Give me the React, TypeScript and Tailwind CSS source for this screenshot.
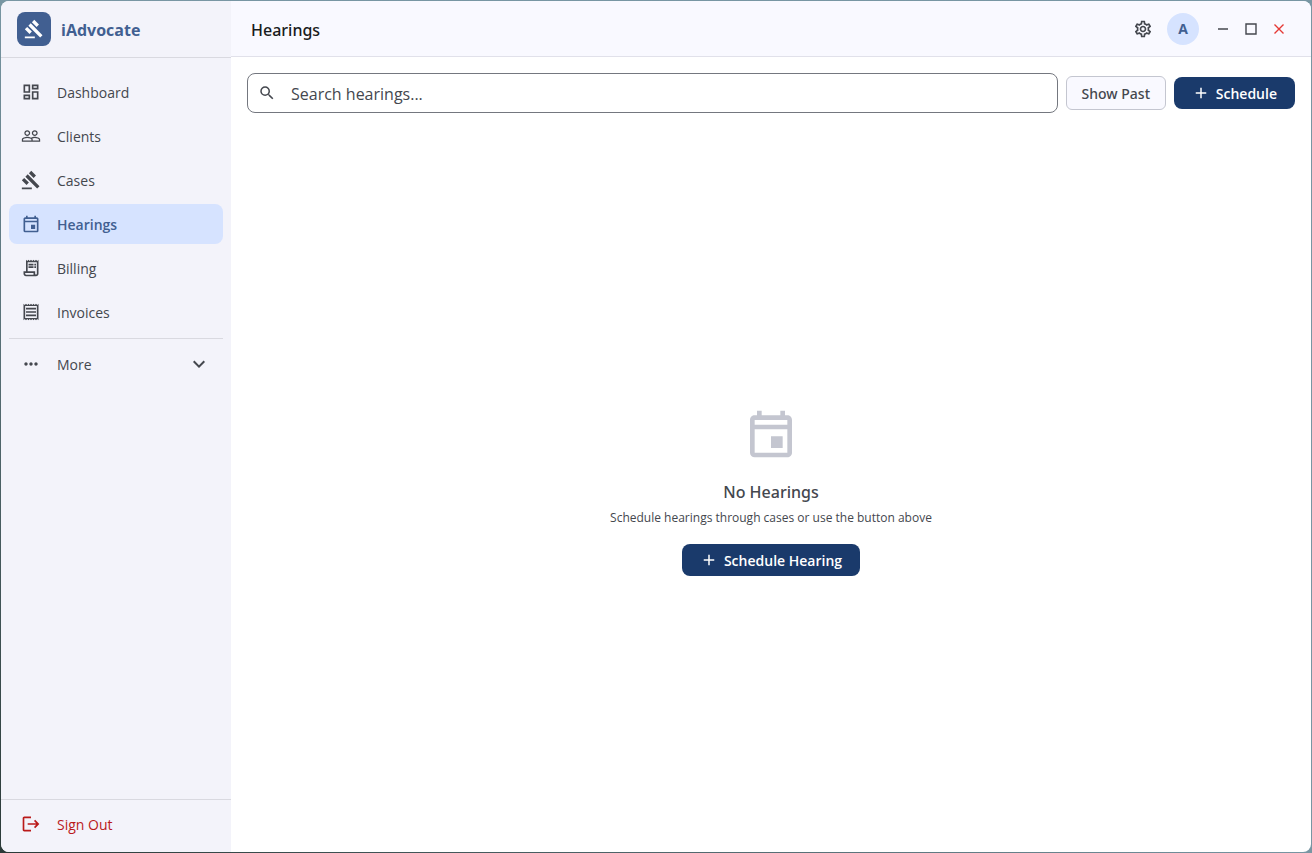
import { useState } from "react";
import type { IconType } from "react-icons";
import {
  MdAdd,
  MdExpandMore,
  MdGavel,
  MdLogout,
  MdMoreHoriz,
  MdOutlineDashboard,
  MdOutlineEvent,
  MdOutlineReceipt,
  MdOutlineReceiptLong,
  MdOutlineSettings,
  MdPeopleOutline,
  MdSearch,
} from "react-icons/md";

type NavItem = { label: string; icon: IconType };

const NAV: NavItem[] = [
  { label: "Dashboard", icon: MdOutlineDashboard },
  { label: "Clients", icon: MdPeopleOutline },
  { label: "Cases", icon: MdGavel },
  { label: "Hearings", icon: MdOutlineEvent },
  { label: "Billing", icon: MdOutlineReceiptLong },
  { label: "Invoices", icon: MdOutlineReceipt },
];

function Sidebar() {
  const [active, setActive] = useState("Hearings");

  return (
    <aside className="flex w-[230px] shrink-0 flex-col bg-[#f3f3fa]">
      <div className="flex h-[57px] items-center gap-2.5 border-b border-[#d9d9e0] px-4">
        <span className="grid size-[34px] place-items-center rounded-lg bg-[#415f91] text-white">
          <MdGavel className="size-5" />
        </span>
        <span className="pt-0.5 text-base font-bold text-[#415f91]">iAdvocate</span>
      </div>

      <nav className="flex flex-col gap-1 px-2 pt-3.5">
        {NAV.map(({ label, icon: Icon }) => (
          <button
            key={label}
            onClick={() => setActive(label)}
            className={
              active === label
                ? "flex h-10 items-center gap-4 rounded-lg bg-[#d6e3ff] px-3 text-sm font-semibold text-[#415f91]"
                : "flex h-10 items-center gap-4 rounded-lg px-3 text-sm text-[#44474e]"
            }
          >
            <Icon className="size-5" />
            <span className="pt-0.5">{label}</span>
          </button>
        ))}
        <hr className="mt-0.5 mb-px border-[#d9d9e0]" />
        <button className="flex h-10 items-center gap-4 rounded-lg px-3 text-sm text-[#44474e]">
          <MdMoreHoriz className="size-5" />
          <span className="pt-0.5">More</span>
          <MdExpandMore className="ml-auto size-6" />
        </button>
      </nav>

      <div className="mt-auto border-t border-[#d9d9e0] px-2 pt-1 pb-2">
        <button className="flex h-10 w-full items-center gap-4 rounded-lg px-3 text-sm text-[#ba1a1a]">
          <MdLogout className="size-5" />
          <span className="pt-0.5">Sign Out</span>
        </button>
      </div>
    </aside>
  );
}

function TopBar() {
  return (
    <header className="flex h-14 items-center border-b border-[#e1e1ea] bg-[#f9f9ff] pr-[18px] pl-5">
      <h1 className="pt-0.5 font-['Noto_Sans',sans-serif] text-base font-medium text-[#191c20]">
        Hearings
      </h1>
      <div className="ml-auto flex items-center">
        <button aria-label="Settings" className="grid size-8 place-items-center text-[#44474e]">
          <MdOutlineSettings className="size-5" />
        </button>
        <button className="mr-2.5 ml-2 size-8 rounded-full bg-[#d6e3ff] text-sm font-bold text-[#415f91]">
          A
        </button>
        <button aria-label="Minimize" className="grid size-7 place-items-center text-[#44474e]">
          <svg viewBox="0 0 12 12" className="size-3" fill="none" stroke="currentColor">
            <path d="M1 6h10" strokeWidth="1.4" />
          </svg>
        </button>
        <button aria-label="Maximize" className="grid size-7 place-items-center text-[#44474e]">
          <svg viewBox="0 0 12 12" className="size-3" fill="none" stroke="currentColor">
            <path d="M1 1h10v10H1z" strokeWidth="1.4" />
          </svg>
        </button>
        <button aria-label="Close" className="grid size-7 place-items-center text-[#e53935]">
          <svg viewBox="0 0 12 12" className="size-3" fill="none" stroke="currentColor">
            <path d="M1.5 1.5l9 9m0-9l-9 9" strokeWidth="1.4" />
          </svg>
        </button>
      </div>
    </header>
  );
}

export default function App() {
  const [query, setQuery] = useState("");

  return (
    <div className="flex h-screen bg-linear-to-tr from-[#2b3a38] via-[#7896a3] to-[#7896a3] p-px font-['Open_Sans','Noto_Sans',sans-serif]">
      <div className="flex flex-1 overflow-hidden rounded-lg bg-white">
        <Sidebar />
        <div className="flex min-w-0 flex-1 flex-col">
          <TopBar />
          <main className="flex flex-1 flex-col p-4">
            <div className="flex items-center gap-2">
              <label className="flex h-10 flex-1 items-center gap-[15px] rounded-lg border border-[#74777f] pl-2.5 text-[#44474e]">
                <MdSearch className="size-[18px]" />
                <input
                  type="text"
                  aria-label="Search hearings"
                  placeholder="Search hearings..."
                  value={query}
                  onChange={(e) => setQuery(e.target.value)}
                  className="min-w-0 flex-1 pt-0.5 text-base outline-none placeholder:text-[#44474e]"
                />
              </label>
              <button className="h-[34px] w-[100px] rounded-md border border-[#c4c6d0] bg-[#f9f9ff] pt-0.5 font-['Noto_Sans',sans-serif] text-sm font-medium text-[#44474e]">
                Show Past
              </button>
              <button className="flex h-8 items-center gap-1.5 rounded-lg bg-[#1a3a6b] px-[18px] text-sm font-semibold text-white">
                <MdAdd className="size-[18px]" />
                <span className="pt-0.5">Schedule</span>
              </button>
            </div>

            <div className="flex flex-1 flex-col items-center justify-center pt-8">
              <MdOutlineEvent className="size-14 text-[#c4c6d0]" />
              <h2 className="mt-4 pt-0.5 font-['Noto_Sans',sans-serif] text-base font-medium text-[#44474e]">
                No Hearings
              </h2>
              <p className="mt-1 text-xs leading-5 text-[#44474e]">
                Schedule hearings through cases or use the button above
              </p>
              <button className="mt-4 flex h-8 items-center gap-1.5 rounded-lg bg-[#1a3a6b] px-[18px] text-sm font-semibold text-white">
                <MdAdd className="size-[18px]" />
                <span className="pt-0.5">Schedule Hearing</span>
              </button>
            </div>
          </main>
        </div>
      </div>
    </div>
  );
}
